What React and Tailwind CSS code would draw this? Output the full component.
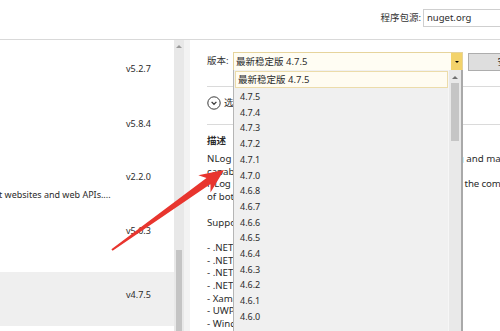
const versions = ['4.7.5', '4.7.4', '4.7.3', '4.7.2', '4.7.1', '4.7.0', '4.6.8', '4.6.7', '4.6.6', '4.6.5', '4.6.4', '4.6.3', '4.6.2', '4.6.1', '4.6.0'];

const descLines = [
  { text: 'NLog is a logging platform for .NET with rich log routing and management', cls: 'tracking-[0.03px]' },
  { text: 'capabilities.' },
  { text: 'NLog supports traditional logging, structured logging and the combination', cls: 'tracking-[-0.15px]' },
  { text: 'of both.' },
  { text: '\u00a0' },
  { text: 'Supported platforms:' },
  { text: '\u00a0' },
  { text: '- .NET Framework 3.5, 4, 4.5, 4.6 & 4.7' },
  { text: '- .NET Framework 4 client profile' },
  { text: '- .NET Standard 1.3+ and 2.0+' },
  { text: '- .NET Core 2.0+' },
  { text: '- Xamarin Android, Xamarin iOS' },
  { text: '- UWP' },
  { text: '- Windows Phone 8' },
];

const Arrow = () => (
  <svg className="absolute left-0 top-0 pointer-events-none" width="500" height="331" viewBox="0 0 500 331">
    <polygon
      points="111.4,249.2 206.5,178.1 198.3,175.3 224,170 210.5,192.4 210.5,183.9 112.6,250.8"
      fill="#e8352e"
    />
  </svg>
);

export default function App() {
  return (
    <div
      className="relative w-[500px] h-[331px] overflow-hidden bg-white text-[9px] text-[#2b2b2b]"
      style={{ fontFamily: "'Noto Sans', 'Noto Sans CJK SC', sans-serif" }}
    >
      {/* Top bar */}
      <div className="h-[40px] border-b border-[#d9d9d9] flex items-start pt-[9px] justify-end">
        <span className="text-[9.5px] leading-[18px] mr-[2px] text-[#333] whitespace-nowrap">程序包源:</span>
        <div className="w-[77px] h-[18px] shrink-0 border border-[#cfcfcf] border-r-0 pl-[3px] leading-[16px] text-[9.5px]">nuget.org</div>
      </div>

      <div className="flex h-[291px]">
        {/* Left package list */}
        <div className="w-[174px] shrink-0 flex flex-col">
          <div className="h-[55px] pt-[23px] pl-[126px] leading-[12px]">v5.2.7</div>
          <div className="h-[55px] pt-[23px] pl-[126px] leading-[12px]">v5.8.4</div>
          <div className="h-[58px] pt-[21px] leading-[12px]">
            <div className="pl-[126px]">v2.2.0</div>
            <div className="mt-[6px] -ml-[1px] whitespace-nowrap">t websites and web APIs....</div>
          </div>
          <div className="h-[64px] pt-[17px] pl-[126px] leading-[12px]">v5.0.3</div>
          <div className="h-[54px] pt-[17px] pl-[126px] leading-[12px] bg-[#efefef]">v4.7.5</div>
        </div>

        {/* Left scrollbar */}
        <div className="w-[10px] shrink-0 bg-[#e8e8e8] flex flex-col items-center">
          <div className="mt-[5px] w-0 h-0 border-l-[3px] border-r-[3px] border-b-[3px] border-l-transparent border-r-transparent border-b-[#9a9a9a]"></div>
          <div className="mt-[202px] w-[6px] flex-1 bg-[#c4c4c4]"></div>
        </div>
        <div className="w-[6px] shrink-0 bg-[#f3f3f3]"></div>

        {/* Right details panel */}
        <div className="relative flex-1 min-w-0 pl-[17px] overflow-hidden">
          <div className="flex items-center mt-[12px] h-[19px]">
            <span className="w-[26px] shrink-0 whitespace-nowrap text-[9.5px] text-[#333]">版本:</span>
            <div className="w-[230px] h-[19px] shrink-0 flex border border-[#e6d49c] bg-[#fffdf3]">
              <div className="flex-1 pl-[2px] text-[9.5px] leading-[17px] whitespace-nowrap">最新稳定版 4.7.5</div>
              <div className="w-[11px] bg-[#f3d36b] flex items-center justify-center">
                <div className="w-0 h-0 border-l-[2px] border-r-[2px] border-t-[2px] border-l-transparent border-r-transparent border-t-black"></div>
              </div>
            </div>
            <div className="ml-[5px] w-[78px] h-[18px] shrink-0 bg-[#dedede] border border-[#adadad] text-center text-[9.5px] leading-[16px]">安装</div>
          </div>

          <div className="mt-[15px] border-t border-[#dadada]"></div>

          <div className="flex items-center mt-[9px] h-[14px]">
            <svg width="14" height="14" viewBox="0 0 14 14">
              <circle cx="7" cy="7" r="6.2" fill="none" stroke="#3a3a3a" strokeWidth="1" />
              <path d="M4.6 5.9 L7 8.3 L9.4 5.9" fill="none" stroke="#3a3a3a" strokeWidth="1.3" />
            </svg>
            <span className="ml-[3px] text-[9.5px] whitespace-nowrap">选项</span>
          </div>

          <div className="mt-[14px] border-t border-[#dadada]"></div>

          <div className="mt-[10px] font-bold text-[9.5px] leading-[12px]">描述</div>
          <div className="mt-[6px] text-[9.7px] leading-[12.7px] whitespace-nowrap">
            {descLines.map((line, i) => (
              <div key={i} className={line.cls}>{line.text}</div>
            ))}
          </div>

          {/* Version dropdown popup */}
          <div className="absolute left-[43px] top-[30px] w-[230px] h-[270px] bg-[#f0f0f0] border-l border-[#b5b5b5] border-r-2 border-r-[#a9a9a9] flex">
            <div className="flex-1 flex flex-col pl-[1px] pt-[1px]">
              <div className="h-[17px] border border-[#ecdcaa] bg-[#fffcf1] pl-[2px] text-[9.5px] leading-[15px]">最新稳定版 4.7.5</div>
              <div className="pt-[1px] pl-[5px] leading-[15.7px]">
                {versions.map((v) => (
                  <div key={v}>{v}</div>
                ))}
              </div>
            </div>
            <div className="w-[13px] bg-[#e9e9e9] flex flex-col items-center border-l border-[#f6f6f6]">
              <div className="mt-[6px] w-0 h-0 border-l-[3px] border-r-[3px] border-b-[3px] border-l-transparent border-r-transparent border-b-[#707070]"></div>
              <div className="mt-[4px] w-[8px] h-[58px] bg-[#c5c5c5]"></div>
            </div>
          </div>
        </div>
      </div>

      <Arrow />
    </div>
  );
}
